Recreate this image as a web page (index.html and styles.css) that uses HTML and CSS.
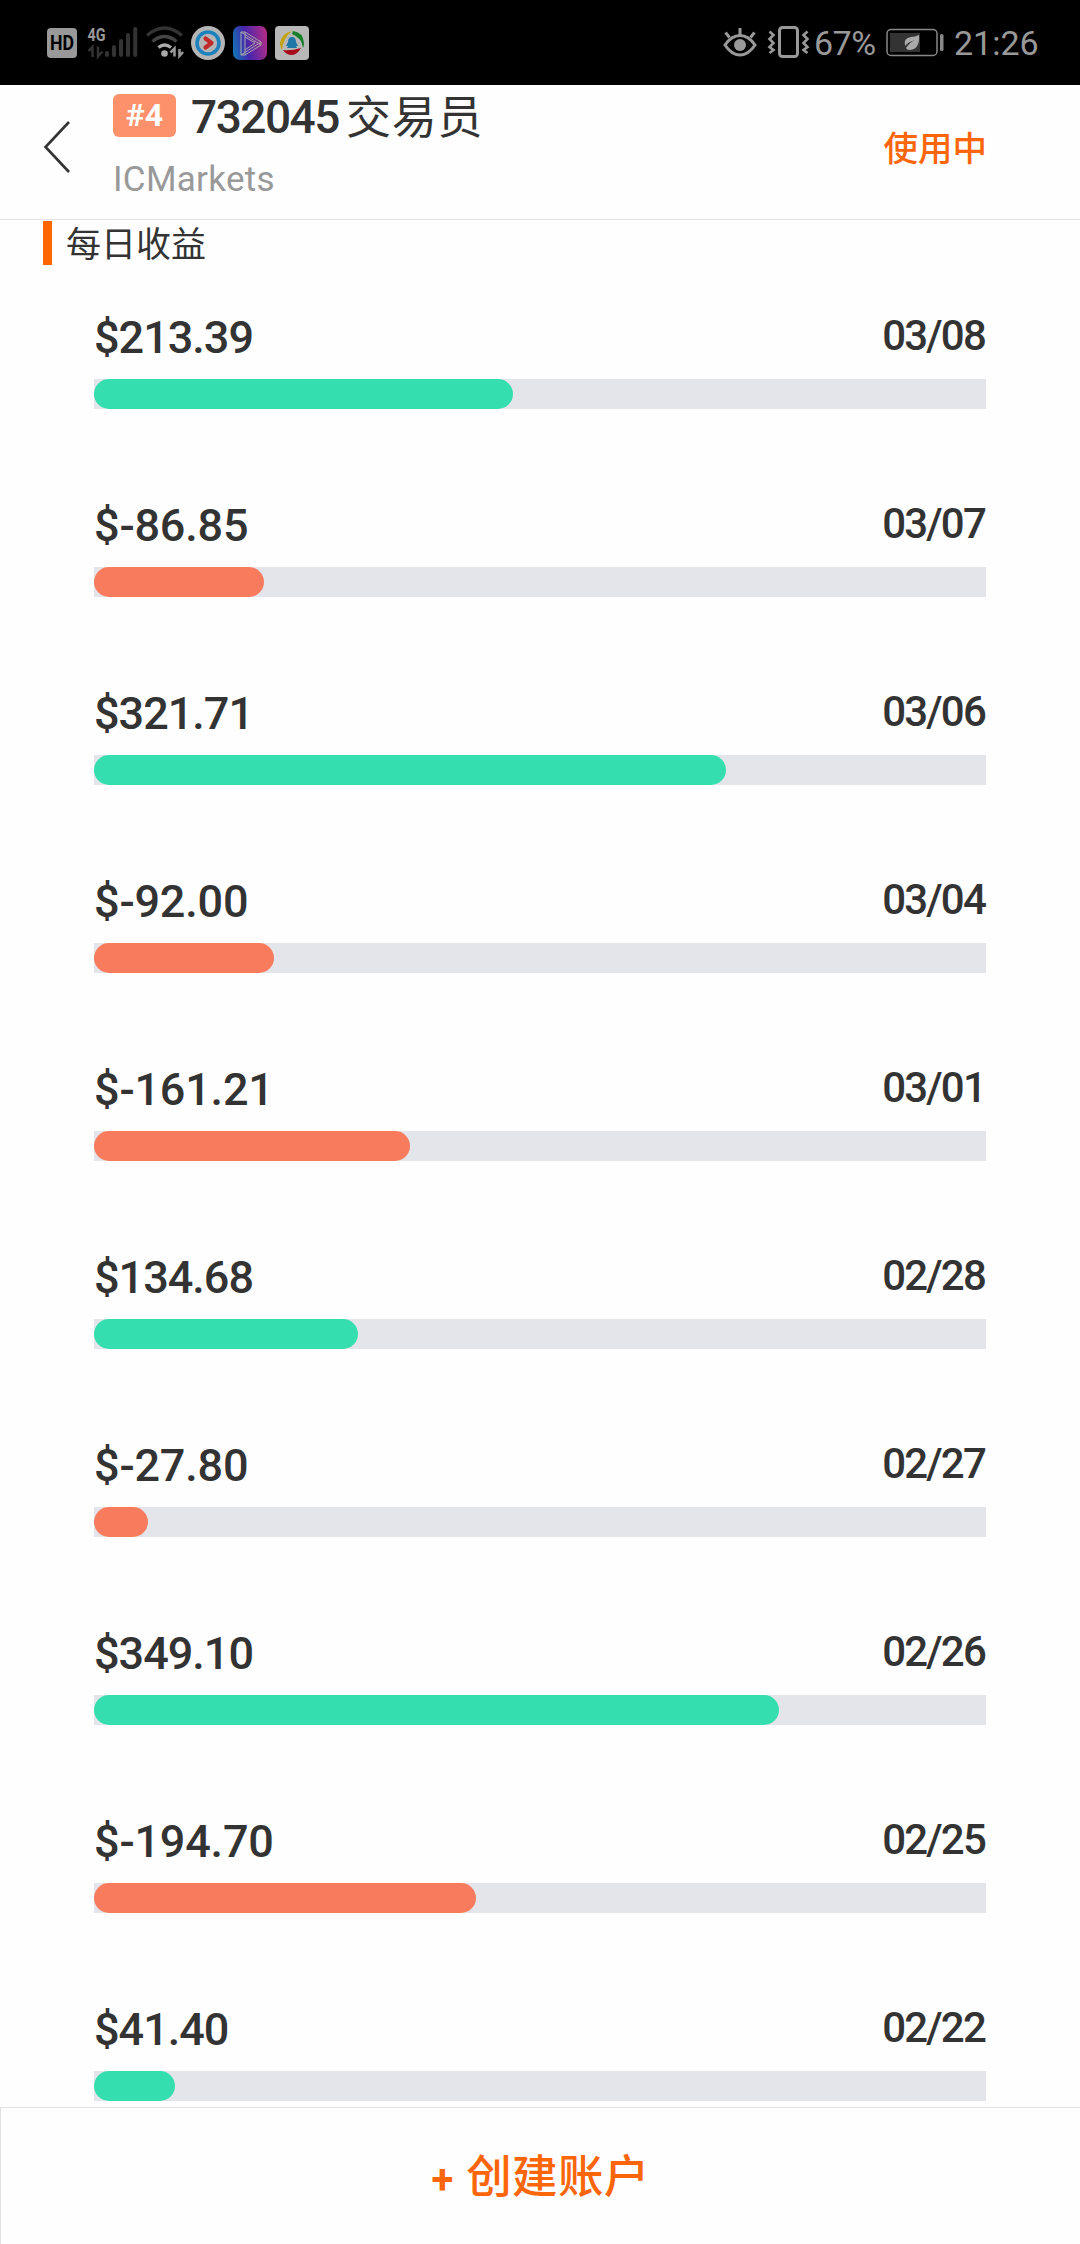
FILE: index.html
```html
<!DOCTYPE html>
<html lang="zh-CN">
<head>
    <meta charset="utf-8">
    <title>每日收益</title>
    <link rel="stylesheet" href="styles.css">
</head>
<body>
    <div class="status">
        <div class="status-left">
            <svg class="hd" width="30" height="34" viewBox="47 26 30 34">
                <rect x="47" y="28" width="30" height="30" rx="4" fill="#999"/>
                <text x="62" y="49.5" text-anchor="middle" textLength="24" lengthAdjust="spacingAndGlyphs" class="hd-text">HD</text>
            </svg>
            <svg class="signal" width="50" height="34" viewBox="87 26 50 34">
                <text x="87.500" y="40.500" textLength="18" lengthAdjust="spacingAndGlyphs" class="net-text">4G</text>
                <path d="M88.500 51l4-4v10M98 46.500v10l4.500-5" fill="none" stroke="#333" stroke-width="2.500"/>
                <path d="M107 53v2M114 47v8M121 41v14M128 35v20M135.200 29v26" stroke="#333" stroke-width="4" stroke-linecap="round"/>
            </svg>
            <svg class="wifi" width="38" height="34" viewBox="146 26 38 34">
                <g fill="none" stroke-width="3.200">
                    <path d="M147 35.500q17.500-15 35 0" stroke="#333"/>
                    <path d="M152.500 41.500q12-10 24 0" stroke="#444"/>
                    <path d="M158.500 47.500q6-5 12.500 0" stroke="#aaa"/>
                    <path d="M170.500 52.500l4-4v8M179.500 49v7l3.500-4" stroke="#999" stroke-width="2.500"/>
                </g>
                <circle cx="164.500" cy="53.500" r="3.300" fill="#aaa"/>
            </svg>
            <svg class="app app-first" width="34" height="34" viewBox="0 0 34 34">
                <circle cx="17" cy="17" r="17" fill="#b5b5b5"/>
                <circle cx="17" cy="17" r="11" fill="none" stroke="#1c82bd" stroke-width="3.600"/>
                <path d="M14.500 12.500l6 4.500-6 4.500" fill="none" stroke="#c02a2a" stroke-width="4.200" stroke-linecap="round" stroke-linejoin="round"/>
            </svg>
            <svg class="app" width="34" height="34" viewBox="0 0 34 34">
                <defs>
                    <linearGradient id="purple" x1="0" y1="0.600" x2="1" y2="0.400">
                        <stop offset="0" stop-color="#1570b5"/>
                        <stop offset="0.400" stop-color="#4526ac"/>
                        <stop offset="1" stop-color="#b02c88"/>
                    </linearGradient>
                </defs>
                <rect width="34" height="34" rx="7" fill="url(#purple)"/>
                <path d="M8 6h4l16 10v3L12 29H8zM12 6v23M8 6l20 13M8 29l20-13M12 11l10 6-10 7" fill="none" stroke="#aaa" stroke-width="1"/>
            </svg>
            <svg class="app" width="34" height="34" viewBox="0 0 34 34">
                <rect width="34" height="34" rx="4" fill="#b8b8b8"/>
                <path d="M17 5Q7 7 5 17q0 4 2 7Q8 12 17 5z" fill="#c4a310"/>
                <path d="M18 5q10 1 11 12 0 3-1 5-1-10-11-14z" fill="#177f2b"/>
                <path d="M8 24q8 1 18-2-4 7-9 7-6 0-9-5z" fill="#a50b18"/>
                <path d="M17 11q-4 0-4 5l-2 4h2l-1 2h10l-1-2h2l-2-4q0-5-4-5z" fill="#1d78a8"/>
            </svg>
        </div>
        <div class="status-right">
            <svg width="34" height="34" viewBox="723.500 26 34 34">
                <path d="M725.500 45q6.500-9.500 15-9.500t15 9.500q-6.500 10-15 10t-15-10z" fill="none" stroke="#999" stroke-width="3"/>
                <path d="M740.500 28v8M726 32.500l4 5M755 32.500l-4 5" stroke="#999" stroke-width="3"/>
                <circle cx="740.500" cy="45" r="6" fill="#999"/>
            </svg>
            <svg class="vibrate" width="40" height="34" viewBox="768 26 40 34">
                <rect x="779.500" y="27.500" width="18" height="29" rx="3" fill="none" stroke="#999" stroke-width="3"/>
                <path d="M769.500 31.500l4 3.500-4 4 4 4-4 4 4 3-4 3M807.500 31.500l-4 3.500 4 4-4 4 4 4-4 3 4 3" fill="none" stroke="#999" stroke-width="2.600"/>
            </svg>
            <span class="percent">67%</span>
            <svg class="battery" width="58" height="34" viewBox="886 26 58 34">
                <rect x="887" y="29.500" width="50" height="26" rx="4" fill="none" stroke="#888" stroke-width="1.500"/>
                <rect x="890" y="33" width="30" height="19" fill="#333"/>
                <rect x="940" y="34" width="3.500" height="17" rx="1.500" fill="#888"/>
                <path d="M919 35q1 15-10 15-2 0-3-2 4-6 9-8-7 2-10 6-2-8 6-9 4 0 8-2z" fill="#aaa"/>
            </svg>
            <span class="clock">21:26</span>
        </div>
    </div>

    <div class="header">
        <svg class="back" width="28" height="54" viewBox="0 0 28 54">
            <path d="M26 2L2.500 27 26 52" fill="none" stroke="#333" stroke-width="2.600"/>
        </svg>
        <div class="account">
            <div class="account-name">
                <span class="rank">#4</span>
                <span class="number">732045</span>
                <span class="role">交易员</span>
            </div>
            <div class="broker">ICMarkets</div>
        </div>
        <div class="using">使用中</div>
    </div>

    <div class="content">
        <h2 class="title">每日收益</h2>
        <ul class="list">
            <li class="item">
                <div class="info"><span class="money">$213.39</span><span class="date">03/08</span></div>
                <div class="track"><div class="bar up" style="width: 46.97%"></div></div>
            </li>
            <li class="item">
                <div class="info"><span class="money loss">$-86.85</span><span class="date">03/07</span></div>
                <div class="track"><div class="bar down" style="width: 19.06%"></div></div>
            </li>
            <li class="item">
                <div class="info"><span class="money">$321.71</span><span class="date">03/06</span></div>
                <div class="track"><div class="bar up" style="width: 70.82%"></div></div>
            </li>
            <li class="item">
                <div class="info"><span class="money loss">$-92.00</span><span class="date">03/04</span></div>
                <div class="track"><div class="bar down" style="width: 20.18%"></div></div>
            </li>
            <li class="item">
                <div class="info"><span class="money loss">$-161.21</span><span class="date">03/01</span></div>
                <div class="track"><div class="bar down" style="width: 35.43%"></div></div>
            </li>
            <li class="item">
                <div class="info"><span class="money">$134.68</span><span class="date">02/28</span></div>
                <div class="track"><div class="bar up" style="width: 29.6%"></div></div>
            </li>
            <li class="item">
                <div class="info"><span class="money loss">$-27.80</span><span class="date">02/27</span></div>
                <div class="track"><div class="bar down" style="width: 6.05%"></div></div>
            </li>
            <li class="item">
                <div class="info"><span class="money">$349.10</span><span class="date">02/26</span></div>
                <div class="track"><div class="bar up" style="width: 76.79%"></div></div>
            </li>
            <li class="item">
                <div class="info"><span class="money loss">$-194.70</span><span class="date">02/25</span></div>
                <div class="track"><div class="bar down" style="width: 42.83%"></div></div>
            </li>
            <li class="item">
                <div class="info"><span class="money">$41.40</span><span class="date">02/22</span></div>
                <div class="track"><div class="bar up" style="width: 9.08%"></div></div>
            </li>
        </ul>
    </div>

    <div class="footer">
        <span class="plus">+</span>
        <span class="create">创建账户</span>
    </div>
</body>
</html>
```
FILE: styles.css
```css
* {
    box-sizing: border-box;
}

body {
    display: flex;
    flex-direction: column;
    height: 2244px;
    margin: 0;
    overflow: hidden;
    background-color: #fefefe;
    color: #333;
    font-family: Roboto, "Noto Sans CJK SC", sans-serif;
}

svg {
    display: block;
    flex-shrink: 0;
    overflow: visible;
}

/* status bar */
.status {
    display: flex;
    justify-content: space-between;
    flex-shrink: 0;
    height: 85px;
    padding: 26px 42px 0 47px;
    background-color: #000;
    color: #999;
}

.status-left, .status-right {
    display: flex;
    align-items: center;
    height: 34px;
}

.hd-text {
    font-size: 21px;
    font-weight: 700;
    fill: #000;
}

.net-text {
    font-size: 19px;
    font-weight: 700;
    fill: #999;
}

.signal {
    margin-left: 10px;
}

.wifi {
    margin-left: 9px;
}

.app {
    margin-left: 8px;
}

.app-first {
    margin-left: 7px;
}

.vibrate {
    margin-left: 11px;
}

.percent, .clock {
    font-size: 34px;
    line-height: 34px;
    white-space: nowrap;
}

.percent {
    width: 64px;
    margin-left: 6px;
    letter-spacing: -0.5px;
}

.battery {
    margin-left: 8px;
}

.clock {
    width: 84px;
    margin-left: 10px;
}

/* header */
.header {
    display: flex;
    flex-shrink: 0;
    height: 135px;
    padding: 0 93px 0 43px;
    border-bottom: 1px solid #e2e2e2;
}

.back {
    margin-top: 35px;
}

.account {
    flex-grow: 1;
    margin-left: 42px;
}

.account-name {
    display: flex;
    height: 64px;
}

.rank {
    width: 63px;
    height: 43px;
    margin-top: 9px;
    border-radius: 6px;
    background-color: #fd916c;
    color: #fff;
    font-size: 32px;
    font-weight: 700;
    line-height: 43px;
    text-align: center;
}

.number {
    width: 155px;
    margin-left: 15px;
    font-size: 46px;
    font-weight: 500;
    letter-spacing: -1.5px;
    line-height: 65px;
}

.role {
    font-size: 45px;
    letter-spacing: 0.7px;
    line-height: 67px;
}

.broker {
    margin-top: 9px;
    color: #999;
    font-size: 35px;
    letter-spacing: 0.3px;
    line-height: 43px;
}

.using {
    color: #fb660a;
    font-size: 34.5px;
    font-weight: 500;
    line-height: 128px;
}

/* daily income */
.content {
    flex: 1;
    min-height: 0;
    padding-top: 1px;
    overflow: hidden;
}

.title {
    height: 44px;
    margin: 0 0 0 43px;
    padding-left: 14px;
    border-left: 9px solid #ff6600;
    font-size: 35px;
    font-weight: 400;
    line-height: 49px;
}

.list {
    margin: 0;
    padding: 36px 94px 0;
    list-style: none;
}

.item {
    height: 188px;
}

.info {
    display: flex;
    justify-content: space-between;
    height: 78px;
    font-weight: 500;
}

.money {
    font-size: 45px;
    letter-spacing: -1px;
    line-height: 74px;
}

.loss {
    letter-spacing: -0.2px;
}

.date {
    margin-right: 1px;
    font-size: 42px;
    letter-spacing: -1.8px;
    line-height: 69px;
}

.track {
    height: 30px;
    background-color: #e4e5ea;
}

.bar {
    height: 30px;
    border-radius: 15px;
}

.up {
    background-color: #35deae;
}

.down {
    background-color: #f87b5d;
}

/* create account button */
.footer {
    display: flex;
    justify-content: center;
    flex-shrink: 0;
    height: 137px;
    border-top: 1px solid #e2e2e2;
    border-left: 1px solid #e2e2e2;
    color: #fb660a;
}

.plus {
    margin-right: 13px;
    font-size: 40px;
    font-weight: 700;
    line-height: 144px;
}

.create {
    font-size: 45.5px;
    font-weight: 500;
    letter-spacing: 0.3px;
    line-height: 140px;
}
```
